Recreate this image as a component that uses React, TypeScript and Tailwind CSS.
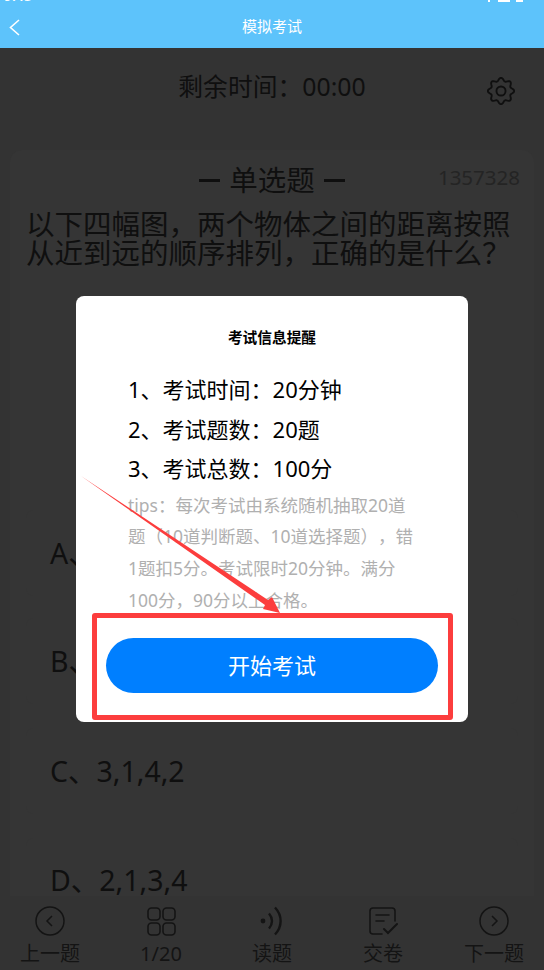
import React from 'react';

const font = 'font-["Noto_Sans","Noto_Sans_CJK_SC",sans-serif] [text-spacing-trim:space-all]';

// wavy eight-lobed outline of the settings gear
const gearPoints = Array.from({ length: 96 }, (_, i) => {
    const a = (i / 96) * Math.PI * 2;
    const r = 10 + 1.3 * Math.cos(8 * a);
    return `${(12 + r * Math.sin(a)).toFixed(2)},${(12 - r * Math.cos(a)).toFixed(2)}`;
}).join(' ');

function Option({ text, className }: { text: string; className: string }) {
    return (
        <div className={`flex shrink-0 rounded-lg bg-[#353535] px-[24px] text-[28.5px] text-[#0f0f0f] ${className}`}>
            {text}
        </div>
    );
}

function NavItem({ label, icon }: { label: string; icon: React.ReactNode }) {
    return (
        <div className="flex w-[60px] flex-col items-center">
            <div className="flex h-[32px] items-center justify-center">{icon}</div>
            <span className="mt-[4px] whitespace-nowrap text-[20px] leading-[26px] text-[#141414]">{label}</span>
        </div>
    );
}

export default function App() {
    return (
        <div className={`relative flex h-[970px] w-[544px] flex-col overflow-hidden bg-[#333333] ${font}`}>
            <div className="relative flex h-12 shrink-0 items-center justify-center overflow-hidden bg-[#5dc3fb] text-white">
                <span className="absolute -top-[15px] left-[4px] text-[14px] font-semibold">9:45</span>
                <div className="absolute right-[21px] top-0 flex items-start">
                    <span className="h-[2px] w-[2px] bg-white" />
                    <span className="ml-[8px] h-[2px] w-[12px] bg-white" />
                    <span className="ml-[6px] h-[2px] w-[7px] bg-white" />
                </div>
                <svg className="absolute left-[9px] top-[19px]" width="12" height="18" viewBox="0 0 12 18" fill="none" stroke="white" strokeWidth="1.6">
                    <path d="M10 1 1.5 8.5 10 16" />
                </svg>
                <span className="pt-1 text-[15px]">模拟考试</span>
            </div>

            <div className="relative flex h-[78px] shrink-0 items-center justify-center text-[24.8px] text-[#0f0f0f]">
                剩余时间：00:00
                <svg className="absolute right-[29px] top-[29px]" width="28" height="28" viewBox="0 0 24 24" fill="none" stroke="#0f0f0f" strokeWidth="1.6" strokeLinejoin="round">
                    <polygon points={gearPoints} />
                    <circle cx="12" cy="12" r="3.9" />
                </svg>
            </div>

            <div className="mx-[10px] mt-[24px] flex min-h-0 flex-1 flex-col rounded-t-xl bg-[#353535] px-[16px]">
                <div className="relative mt-[10px] flex h-[40px] shrink-0 items-center justify-center gap-[9px] text-[28.5px] text-[#0f0f0f]">
                    <span className="h-[3px] w-[21px] bg-[#0f0f0f]" />
                    单选题
                    <span className="h-[3px] w-[21px] bg-[#0f0f0f]" />
                    <span className="absolute -right-[2px] top-[2px] text-[20.5px] text-[#242424]">1357328</span>
                </div>
                <p className="m-0 mt-[10px] text-[28.5px] leading-[29px] text-[#0f0f0f]">
                    以下四幅图，两个物体之间的距离按照从近到远的顺序排列，正确的是什么？
                </p>
                <Option text="A、" className="mt-[242px] h-[86px] items-center" />
                <Option text="B、" className="mt-[22px] h-[86px] items-center" />
                <Option text="C、3,1,4,2" className="mt-[24px] h-[86px] items-center" />
                <Option text="D、2,1,3,4" className="mt-[24px] h-[57px] items-start rounded-b-none pt-[28px] leading-[29px]" />
            </div>

            <div className="flex h-[74px] shrink-0 items-start justify-between bg-[#333333] px-[20px] pt-[9px]">
                <NavItem
                    label="上一题"
                    icon={
                        <svg width="30" height="30" viewBox="0 0 30 30" fill="none" stroke="#141414" strokeWidth="1.5">
                            <circle cx="15" cy="15" r="14" />
                            <path d="M17 10l-5 5 5 5" />
                        </svg>
                    }
                />
                <NavItem
                    label="1/20"
                    icon={
                        <svg width="29" height="29" viewBox="0 0 29 29" fill="none" stroke="#141414" strokeWidth="1.6">
                            <rect x="1" y="1" width="12" height="12" rx="3.5" />
                            <rect x="16" y="1" width="12" height="12" rx="3.5" />
                            <rect x="1" y="16" width="12" height="12" rx="3.5" />
                            <rect x="16" y="16" width="12" height="12" rx="3.5" />
                        </svg>
                    }
                />
                <NavItem
                    label="读题"
                    icon={
                        <svg width="24" height="30" viewBox="0 0 24 30" fill="none" stroke="#141414" strokeWidth="2.4">
                            <circle cx="3" cy="15" r="2.4" fill="#141414" stroke="none" />
                            <path d="M9 7.5c4 4.5 4 10.5 0 15" />
                            <path d="M15 1.5c7.5 8 7.5 19 0 27" />
                        </svg>
                    }
                />
                <NavItem
                    label="交卷"
                    icon={
                        <svg width="30" height="30" viewBox="0 0 30 30" fill="none" stroke="#141414" strokeWidth="1.6" strokeLinecap="round">
                            <path d="M14 28H5a3 3 0 0 1-3-3V5a3 3 0 0 1 3-3h19a3 3 0 0 1 3 3v10" />
                            <path d="M8 9h13M8 15h8" />
                            <path d="M16 23l4 4 9-9" strokeWidth="2" />
                        </svg>
                    }
                />
                <NavItem
                    label="下一题"
                    icon={
                        <svg width="30" height="30" viewBox="0 0 30 30" fill="none" stroke="#141414" strokeWidth="1.5">
                            <circle cx="15" cy="15" r="14" />
                            <path d="M13 10l5 5-5 5" />
                        </svg>
                    }
                />
            </div>

            {/* modal */}
            <div className="absolute left-[76px] top-[296px] flex h-[426px] w-[392px] flex-col rounded-lg bg-white">
                <div className="mt-[31px] text-center text-[14.7px] font-bold leading-5 text-black">考试信息提醒</div>
                <div className="mt-[23px] px-[52px] text-[22px] leading-[39.5px] text-black">
                    <div>1、考试时间：20分钟</div>
                    <div>2、考试题数：20题</div>
                    <div>3、考试总数：100分</div>
                </div>
                <p className="m-0 mt-[1px] px-[52px] text-[17.5px] leading-[31.7px] text-[#b0b0b0]">
                    tips：每次考试由系统随机抽取20道题（10道判断题、10道选择题），错1题扣5分。考试限时20分钟。满分100分，90分以上合格。
                </p>
                <div className="mx-[30px] mt-[22px] flex h-[55px] items-center justify-center rounded-full bg-[#007fff] text-[22px] text-white">
                    开始考试
                </div>
            </div>

            {/* red annotation */}
            <div className="absolute left-[92px] top-[613px] h-[107px] w-[361px] rounded-[3px] border-[5px] border-[#fc3d3d]" />
            <svg className="absolute left-0 top-0" width="544" height="970" viewBox="0 0 544 970" fill="none">
                <path d="M81 476 L268 600 L272 597 L280 613 L263 609 L265 605 Z" fill="#fc3d3d" />
            </svg>
        </div>
    );
}
